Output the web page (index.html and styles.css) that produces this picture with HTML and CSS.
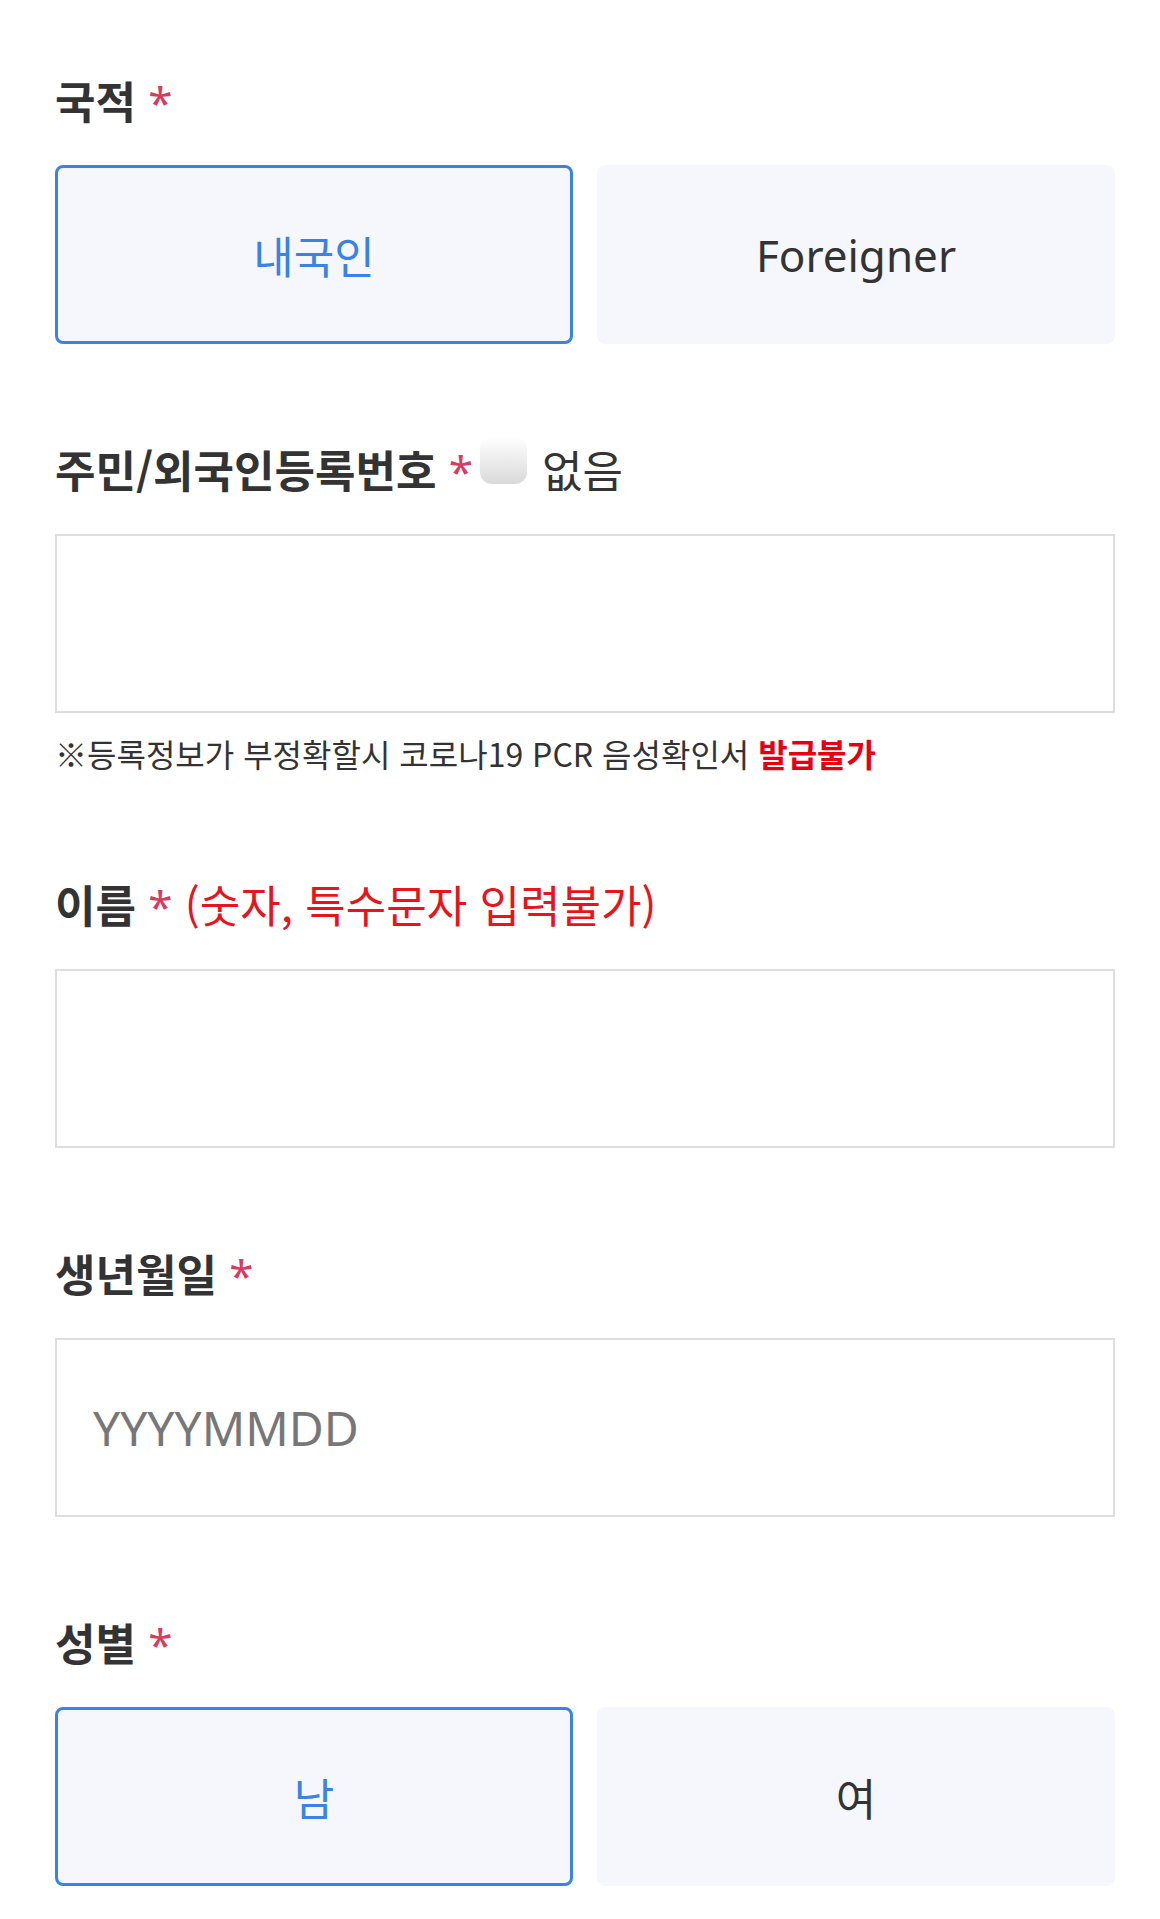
FILE: index.html
```html
<!DOCTYPE html>
<html lang="ko">
<head>
  <meta charset="UTF-8">
  <title>정보 입력</title>
  <link rel="stylesheet" href="styles.css">
</head>
<body>

  <form class="form">
    <div class="field">
      <div class="label">국적 <span class="req">*</span></div>
      <div class="choice">
        <button type="button" class="choice-btn active">내국인</button>
        <button type="button" class="choice-btn">Foreigner</button>
      </div>
    </div>

    <div class="field">
      <div class="label">주민/외국인등록번호 <span class="req">*</span><label class="none-check"><input type="checkbox" class="round-check"><span class="none-text">없음</span></label></div>
      <input type="text" class="text-input">
      <p class="note">※등록정보가 부정확할시 코로나19 PCR 음성확인서 <strong>발급불가</strong></p>
    </div>

    <div class="field">
      <div class="label">이름 <span class="req">*</span> <span class="warn">(숫자, 특수문자 입력불가)</span></div>
      <input type="text" class="text-input">
    </div>

    <div class="field">
      <div class="label">생년월일 <span class="req">*</span></div>
      <input type="text" class="text-input" placeholder="YYYYMMDD">
    </div>

    <div class="field">
      <div class="label">성별 <span class="req">*</span></div>
      <div class="choice">
        <button type="button" class="choice-btn active">남</button>
        <button type="button" class="choice-btn">여</button>
      </div>
    </div>
  </form>

</body>
</html>
```

FILE: styles.css
```css
:root {
  --text-color: #333333;
  --accent-color: #3a83e6;
  --req-color: #d93a5f;
  --warn-color: #e8141b;
  --soft-bg: #f5f7fc;
  --line-color: #dedede;
}

body {
  margin: 0;
  background: #ffffff;
  color: var(--text-color);
  font-family: "Noto Sans", "Noto Sans CJK KR", sans-serif;
}

.form {
  padding: 70px 45px 0 55px;
}

.field {
  margin-bottom: 95px;
}

.field:last-child {
  margin-bottom: 0;
}

.label {
  font-family: "Noto Sans CJK KR", sans-serif;
  font-size: 44px;
  font-weight: 700;
  line-height: 60px;
  margin-bottom: 33px;
  white-space: nowrap;
}

.req {
  font-family: "Noto Sans", sans-serif;
  color: var(--req-color);
  font-weight: 400;
}

.warn {
  color: var(--warn-color);
  font-weight: 400;
}

.none-check {
  font-weight: 400;
}

.round-check {
  appearance: none;
  -webkit-appearance: none;
  display: inline-block;
  vertical-align: top;
  width: 47px;
  height: 47px;
  margin: -2px 15px 0 7px;
  border-radius: 12px;
  background: linear-gradient(#ffffff, #d9d9d9);
}

.choice {
  display: grid;
  grid-template-columns: 1fr 1fr;
  gap: 24px;
}

.choice-btn {
  height: 179px;
  border: none;
  border-radius: 8px;
  background: var(--soft-bg);
  color: var(--text-color);
  font-family: "Noto Sans", "Noto Sans CJK KR", sans-serif;
  font-size: 44px;
  cursor: pointer;
}

.choice-btn.active {
  border: 3px solid var(--accent-color);
  color: var(--accent-color);
}

.text-input {
  display: block;
  box-sizing: border-box;
  width: 100%;
  height: 179px;
  padding: 0 36px;
  border: 2px solid var(--line-color);
  border-radius: 0;
  font-family: "Noto Sans", "Noto Sans CJK KR", sans-serif;
  font-size: 48px;
  color: var(--text-color);
  outline: none;
}

.text-input::placeholder {
  color: #777777;
}

.note {
  margin: 17px 0 0;
  padding-bottom: 3px;
  font-family: "Noto Sans CJK KR", sans-serif;
  font-size: 32px;
}

.note strong {
  color: #e60012;
}
```
